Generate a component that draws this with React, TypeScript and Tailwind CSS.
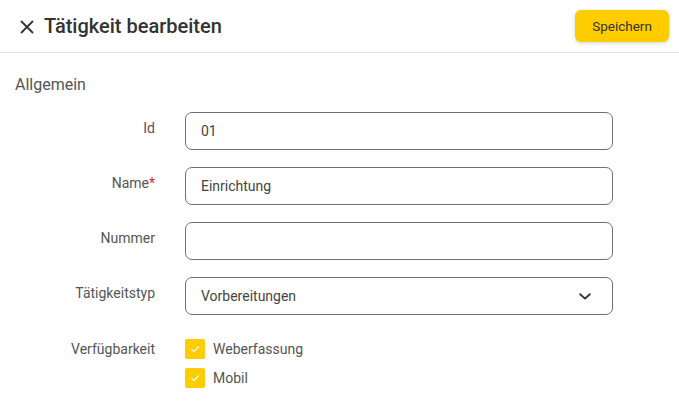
const font = { fontFamily: "Roboto, 'Noto Sans', sans-serif" };

function Field({ label, required, children }: { label: string; required?: boolean; children: React.ReactNode }) {
  return (
    <div className="flex items-start">
      <div className="w-[140px] ml-[15px] text-right pt-[6px] text-[14px] leading-[20px] text-[#555]">
        {label}
        {required && <span className="text-[#d32f2f]">*</span>}
      </div>
      <div className="ml-[30px] w-[428px]">{children}</div>
    </div>
  );
}

function TextInput({ value }: { value: string }) {
  return (
    <div className="h-[38px] rounded-[7px] border border-[#707070] px-[15px] flex items-center text-[14px] text-[#444]">
      {value}
    </div>
  );
}

function Check({ label }: { label: string }) {
  return (
    <div className="flex items-center gap-[8px] h-[20px]">
      <div className="w-[20px] h-[20px] rounded-[2px] bg-[#ffcc00] flex items-center justify-center">
        <svg width="12" height="12" viewBox="0 0 12 12" fill="none">
          <path d="M2.5 6.3 L5 8.6 L9.6 3.6" stroke="white" strokeWidth="1.2" strokeLinecap="round" strokeLinejoin="round" />
        </svg>
      </div>
      <span className="text-[14px] text-[#555]">{label}</span>
    </div>
  );
}

export default function App() {
  return (
    <div className="w-[679px] h-[418px] bg-white overflow-hidden" style={font}>
      {/* Header */}
      <div className="h-[53px] border-b border-[#e2e2e2] flex items-center justify-between pl-[20px] pr-[10px]">
        <div className="flex items-center gap-[10px]">
          <svg width="14" height="14" viewBox="0 0 14 14" className="mt-[1px]">
            <path d="M1.5 1.5 L12.5 12.5 M12.5 1.5 L1.5 12.5" stroke="#333" strokeWidth="1.8" strokeLinecap="round" />
          </svg>
          <h1 className="text-[20px] font-medium text-[#333]">Tätigkeit bearbeiten</h1>
        </div>
        <button className="w-[94px] h-[32px] rounded-[6px] bg-[#ffcc00] text-[13.5px] text-[#333] shadow-[0_1px_4px_rgba(0,0,0,0.18)]">
          Speichern
        </button>
      </div>

      <div className="pl-[15px] pt-[22px] text-[16px] leading-[20px] text-[#555]">Allgemein</div>

      <div className="mt-[17px] flex flex-col gap-[17px]">
        <Field label="Id">
          <TextInput value="01" />
        </Field>
        <Field label="Name" required>
          <TextInput value="Einrichtung" />
        </Field>
        <Field label="Nummer">
          <TextInput value="" />
        </Field>
        <Field label="Tätigkeitstyp">
          <div className="h-[38px] rounded-[7px] border border-[#707070] pl-[15px] pr-[21px] flex items-center justify-between text-[14px] text-[#444]">
            <span>Vorbereitungen</span>
            <svg width="12" height="7" viewBox="0 0 12 7" fill="none">
              <path d="M1.2 1.2 L6 5.6 L10.8 1.2" stroke="#333" strokeWidth="1.9" strokeLinecap="round" strokeLinejoin="round" />
            </svg>
          </div>
        </Field>
      </div>

      <div className="mt-[24px] flex items-start">
        <div className="w-[140px] ml-[15px] text-right text-[14px] leading-[20px] text-[#555]">Verfügbarkeit</div>
        <div className="ml-[30px] flex flex-col gap-[9px]">
          <Check label="Weberfassung" />
          <Check label="Mobil" />
        </div>
      </div>
    </div>
  );
}
